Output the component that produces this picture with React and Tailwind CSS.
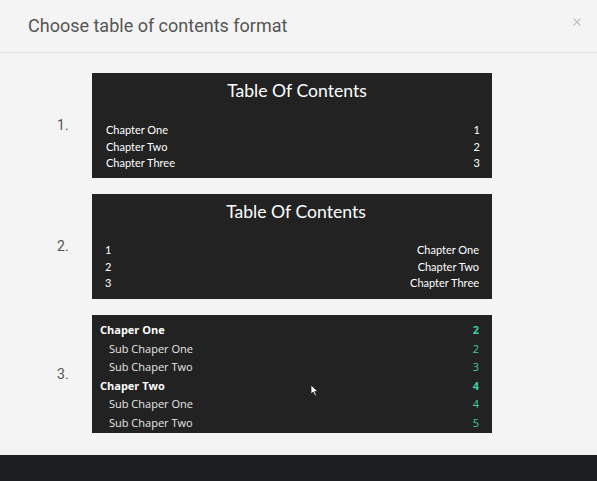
import { X } from "lucide-react";

const chapters = ["Chapter One", "Chapter Two", "Chapter Three"];

const nested = [
  { label: "Chaper One", page: 2, main: true },
  { label: "Sub Chaper One", page: 2 },
  { label: "Sub Chaper Two", page: 3 },
  { label: "Chaper Two", page: 4, main: true },
  { label: "Sub Chaper One", page: 4 },
  { label: "Sub Chaper Two", page: 5 },
];

function Option({ n, h, children }) {
  return (
    <div className="flex items-center">
      <div className="w-[92px] pl-[57px] text-[14px] text-[#555] font-['Roboto',sans-serif]">{n}.</div>
      <div className={`w-[400px] bg-[#222222] text-white font-['Lato',sans-serif] overflow-hidden ${h}`}>{children}</div>
    </div>
  );
}

export default function App() {
  return (
    <div className="flex flex-col h-[481px] w-[597px] bg-[#f4f4f4] overflow-hidden">
      {/* header */}
      <div className="flex items-center justify-between h-[53px] pl-[28px] pr-[14px] border-b border-[#e4e4e4]">
        <h1 className="text-[18px] text-[#555] font-['Roboto',sans-serif] pb-[2px]">Choose table of contents format</h1>
        <X className="w-[12px] h-[12px] text-[#c4c4c4] -mt-[8px]" strokeWidth={2.5} />
      </div>

      {/* options */}
      <div className="relative flex flex-col gap-4 pt-[20px] pb-[21px] border-b border-[#ebebeb]">
        <Option n={1} h="h-[105px]">
          <div className="pt-[6px]">
            <div className="text-center pl-[10px] text-[17.6px] leading-[24px]">Table Of Contents</div>
            <div className="mt-[19px] pl-[14px] pr-[12px] text-[11px] leading-[16.5px]">
              {chapters.map((c, i) => (
                <div key={c} className="flex justify-between">
                  <span>{c}</span>
                  <span>{i + 1}</span>
                </div>
              ))}
            </div>
          </div>
        </Option>

        <Option n={2} h="h-[105px]">
          <div className="pt-[6px]">
            <div className="text-center pl-[8px] text-[17.6px] leading-[24px]">Table Of Contents</div>
            <div className="mt-[18px] pl-[13px] pr-[13px] text-[11px] leading-[16.5px]">
              {chapters.map((c, i) => (
                <div key={c} className="flex justify-between">
                  <span>{i + 1}</span>
                  <span>{c}</span>
                </div>
              ))}
            </div>
          </div>
        </Option>

        <Option n={3} h="h-[118px]">
          <div className="pt-[6px] pl-[8px] pr-[13px] text-[11px] leading-[18.6px] font-['Open_Sans',sans-serif]">
            {nested.map((r, i) => (
              <div key={i} className="flex justify-between">
                <span className={r.main ? "font-bold" : "pl-[9px] text-[#e6e6e6]"}>{r.label}</span>
                <span className={r.main ? "font-bold text-[#3fcf98]" : "text-[#3fcf98]"}>{r.page}</span>
              </div>
            ))}
          </div>
        </Option>

        {/* mouse pointer */}
        <svg className="absolute left-[310px] top-[331px]" width="9" height="13" viewBox="0 0 9 13">
          <path d="M1 1 L1 10 L3.2 8 L5 12 L6.4 11.3 L4.7 7.5 L7.8 7.5 Z" fill="#fff" stroke="#222" strokeWidth="0.8" />
        </svg>
      </div>

      {/* footer */}
      <div className="flex-1 bg-[#1c1f20]" />
    </div>
  );
}
